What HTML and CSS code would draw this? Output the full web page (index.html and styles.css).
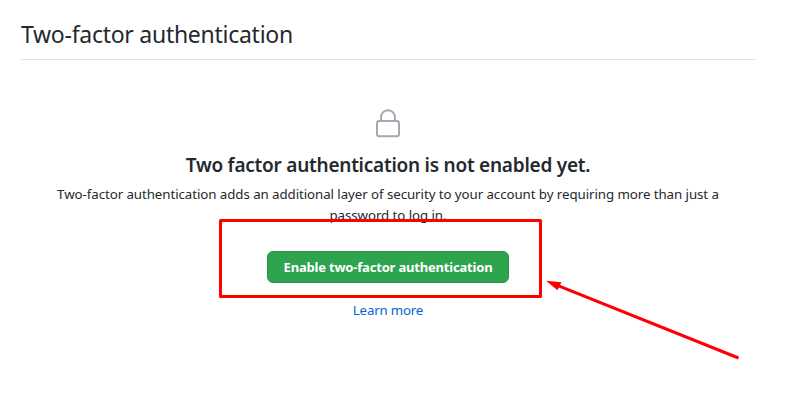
FILE: index.html
```html
<!DOCTYPE html>
<html lang="en">
<head>
<meta charset="utf-8">
<title>Two-factor authentication</title>
<link rel="stylesheet" href="styles.css">
</head>
<body>
<main class="page">
  <h2 class="subhead">Two-factor authentication</h2>
  <section class="blankslate">
    <svg class="lock" viewBox="0 0 24 24" width="32" height="32"><path fill-rule="evenodd" d="M6 9V7.25C6 3.845 8.503 1 12 1s6 2.845 6 6.25V9h.5a2.5 2.5 0 0 1 2.5 2.5v8a2.5 2.5 0 0 1-2.5 2.5h-13A2.5 2.5 0 0 1 3 19.5v-8A2.5 2.5 0 0 1 5.5 9H6zm1.5-1.75C7.5 4.58 9.422 2.5 12 2.5s4.5 2.08 4.5 4.75V9h-9V7.25zm-3 4.25a1 1 0 0 1 1-1h13a1 1 0 0 1 1 1v8a1 1 0 0 1-1 1h-13a1 1 0 0 1-1-1v-8z"/></svg>
    <h3 class="title">Two factor authentication is not enabled yet.</h3>
    <p class="text">Two-factor authentication adds an additional layer of security to your account by requiring more than just a<br>password to log in.</p>
    <a class="button">Enable two-factor authentication</a>
    <a class="link">Learn more</a>
  </section>
</main>
<svg class="annotation" width="790" height="407" viewBox="0 0 790 407">
  <rect x="220.5" y="220.5" width="320" height="76" fill="none" stroke="#fe0000" stroke-width="3" stroke-linejoin="round"/>
  <path d="M738.500 358L558 285.700" fill="none" stroke="#fe0000" stroke-width="3"/>
  <path d="M546 280.800L561.500 282.300L559.500 286L557.500 290.300Z" fill="#fe0000"/>
</svg>
</body>
</html>
```
FILE: styles.css
```css
* { box-sizing: border-box; }
body { margin: 0; background: #fff; color: #24292e; font: 13.3px/21px "Noto Sans", sans-serif; overflow: hidden; }
.page { width: 735px; margin-left: 21px; padding-top: 17px; }
.subhead { margin: 0; height: 43px; border-bottom: 1px solid #e1e4e8; font-size: 23px; line-height: 35px; font-weight: 400; white-space: nowrap; letter-spacing: -0.27px; }
.blankslate { display: flex; flex-direction: column; align-items: center; width: 734px; padding-top: 48px; text-align: center; }
.lock { fill: #a3aab1; }
.title { margin: 10px 0 4px; font-size: 19px; line-height: 30px; font-weight: 600; white-space: nowrap; letter-spacing: -0.24px; }
.text { margin: 0; white-space: nowrap; letter-spacing: -0.07px; }
.button { display: flex; align-items: center; justify-content: center; width: 242px; height: 32px; margin-top: 25px; border: 1px solid #2a9147; border-radius: 6px; background: #2ea44f; color: #fff; font-size: 13px; font-weight: 700; white-space: nowrap; letter-spacing: -0.19px; }
.link { margin-top: 17px; color: #0366d6; letter-spacing: -0.2px; }
.annotation { position: absolute; top: 0; left: 0; pointer-events: none; }
```
